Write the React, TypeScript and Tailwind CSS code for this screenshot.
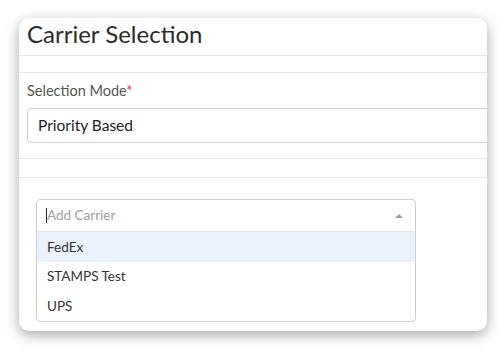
const carriers = ["FedEx", "STAMPS Test", "UPS"];

export default function App() {
  return (
    <div
      className="h-[349px] w-[504px] overflow-hidden bg-white pl-[19px] pt-[18px]"
      style={{ fontFamily: "Lato, 'Open Sans', sans-serif" }}
    >
      <div className="h-[313px] w-[468px] overflow-hidden rounded-[10px] bg-white shadow-[0_4px_14px_rgba(0,0,0,0.35)]">
        {/* header */}
        <div className="flex h-[38px] items-center border-b border-[#e6e6e6] pb-[5px] pl-[8px]">
          <h1 className="text-[24px] leading-none text-[#2b2b2b]">Carrier Selection</h1>
        </div>
        <div className="h-[17px] border-b border-[#e6e6e6]" />

        {/* selection mode */}
        <div className="pl-[8px] pt-[10px]">
          <label className="block text-[14.5px] leading-[16px] text-[#555]">
            Selection Mode<span className="text-[#e02424]">*</span>
          </label>
          <div className="mt-[9px] flex h-[35px] w-[480px] items-center rounded-[4px] border border-[#cfcfcf] pl-[10px] text-[15.5px] text-[#222]">
            Priority Based
          </div>
        </div>
        <div className="mt-[15px] h-[20px] border-y border-[#e6e6e6]" />

        {/* carrier dropdown */}
        <div className="ml-[17px] mt-[21px] w-[380px] rounded-[4px] border border-[#cdcdcd] bg-white">
          <div className="flex h-[32px] items-center justify-between border-b border-[#e3e3e3] pl-[9px] pr-[12px]">
            <div className="flex items-center">
              <span className="h-[15px] w-px bg-[#222]" />
              <span className="text-[13.5px] text-[#a0a0a0]">Add Carrier</span>
            </div>
            <span className="h-0 w-0 border-x-[4px] border-b-[4px] border-x-transparent border-b-[#999]" />
          </div>
          {carriers.map((c, i) => (
            <div
              key={c}
              className={`flex h-[29.5px] items-center pl-[10px] text-[13.5px] text-[#333] ${i === 0 ? "bg-[#eaf3fd]" : ""}`}
            >
              {c}
            </div>
          ))}
        </div>
      </div>
    </div>
  );
}
